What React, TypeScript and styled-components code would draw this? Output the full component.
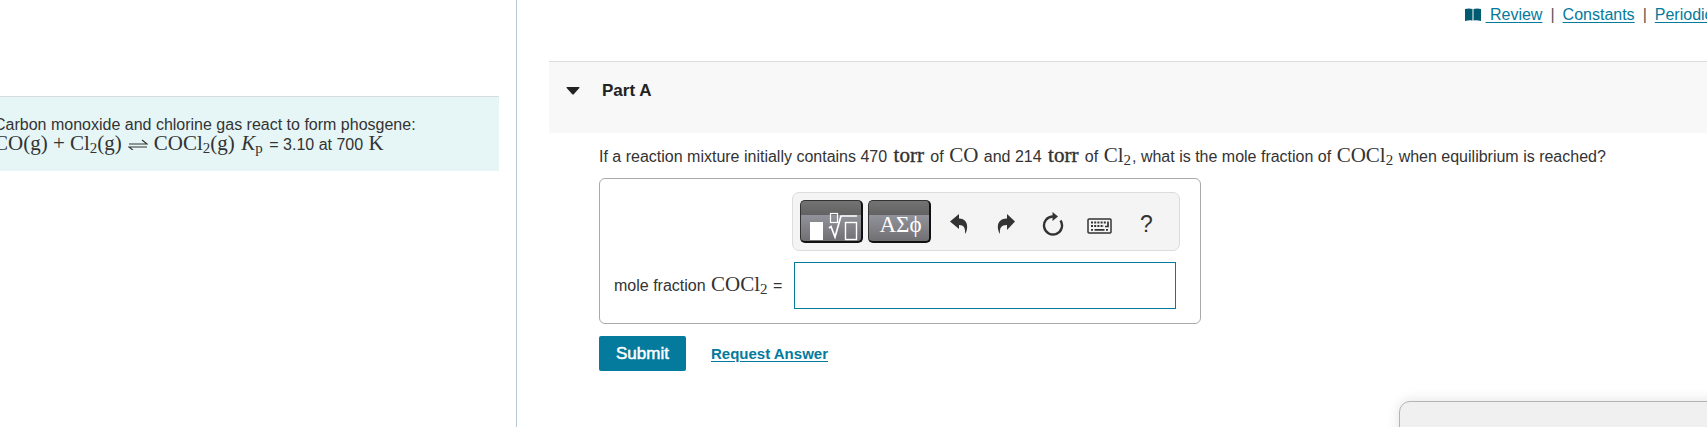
import React from "react";
import styled, { createGlobalStyle } from "styled-components";

const GlobalStyle = createGlobalStyle`
  * { box-sizing: border-box; }
  body {
    margin: 0;
    background: #fff;
    color: #333;
    font-family: "Liberation Sans", Arial, sans-serif;
    font-size: 16px;
    line-height: 20px;
    overflow: hidden;
  }
`;

const Page = styled.div`
  display: grid;
  grid-template-columns: minmax(0, 517fr) minmax(0, 1190fr);
  min-height: 100vh;
`;

const Sidebar = styled.aside`
  border-right: 1px solid #b9c8d6;
  padding: 96px 17px 0 0;
  overflow: hidden;
`;

const Intro = styled.section`
  margin-left: -20px;
  padding: 18px 0 16px 14px;
  border-top: 1px solid #d5dcdc;
  background: #e6f6f7;
  white-space: nowrap;
`;

const Line = styled.p`
  margin: 0;
  height: 20px;
`;

const Math = styled.span<{ $gap?: number; $bold?: boolean }>`
  font-family: "Liberation Serif", "Times New Roman", serif;
  font-size: 21px;
  line-height: 16px;
  padding: 0 ${(p) => p.$gap ?? 1}px;
  -webkit-text-stroke: ${(p) => (p.$bold ? "0.4px" : "0")};
`;

const Sub = styled.sub`
  font-size: 15px;
  line-height: 0;
  vertical-align: -3px;
`;

const Arrow = styled.svg`
  width: 20px;
  height: 12px;
  margin: 0 6px;
`;

const Main = styled.main`
  padding-left: 32px;
  overflow: hidden;
`;

const Resources = styled.nav`
  display: flex;
  justify-content: flex-end;
  align-items: center;
  height: 61px;
  margin-right: -48px;
  padding: 5px 0 36px;
  white-space: pre;
`;

const ResourceLink = styled.a`
  color: #047a9c;
  text-underline-offset: 2px;
`;

const Bar = styled.span`
  padding: 0 8px;
  color: #555;
`;

const Book = styled.svg`
  width: 16px;
  height: 14px;
  margin-right: 5px;
`;

const PartHeader = styled.header`
  height: 72px;
  padding: 19px 17px;
  display: flex;
  align-items: flex-start;
  border-top: 1px solid #dcdcdc;
  background: #f8f8f8;
`;

const Toggle = styled.button`
  display: flex;
  align-items: center;
  gap: 22px;
  padding: 0;
  border: 0;
  background: none;
  color: #222;
  font: bold 17px/20px "Liberation Sans", Arial, sans-serif;
`;

const PartBody = styled.form`
  padding: 14px 0 56px 50px;
`;

const Question = styled.p`
  margin: 0 0 11px;
  height: 20px;
  white-space: nowrap;
`;

const AnswerBox = styled.div`
  display: grid;
  grid-template-columns: 178px minmax(0, 1fr);
  align-items: center;
  row-gap: 11px;
  max-width: 602px;
  padding: 13px 20px 14px 14px;
  border: 1px solid #a9a9a9;
  border-radius: 6px;
`;

const Toolbar = styled.div`
  grid-column: 2;
  display: flex;
  align-items: center;
  height: 59px;
  padding: 0 7px;
  border: 1px solid #dcdcdc;
  border-radius: 7px;
  background: #f4f4f4;
`;

const PaletteButton = styled.button`
  display: flex;
  align-items: flex-end;
  justify-content: center;
  width: 63px;
  height: 43px;
  margin-right: 5px;
  padding: 0 0 0 3px;
  border: 1px solid #333;
  border-right: 2px solid #111;
  border-bottom: 2px solid #111;
  border-radius: 5px;
  background: linear-gradient(#737373 0, #626262 14px, #92929b 14px, #707073 100%);
  color: #fff;
  font: 23px/32px "Liberation Serif", serif;
`;

const Tools = styled.div`
  display: flex;
  margin-left: -1px;
`;

const ToolButton = styled.button`
  display: grid;
  place-items: center;
  width: 47px;
  height: 40px;
  padding: 4px 0 0;
  border: 0;
  background: none;
  color: #333;
  font: 23px/28px "Liberation Sans", Arial, sans-serif;
`;

const AnswerLabel = styled.label`
  white-space: nowrap;
`;

const AnswerInput = styled.input`
  height: 47px;
  margin: 0 4px 0 2px;
  min-width: 0;
  padding: 0 10px;
  border: 1px solid #047a9c;
  border-radius: 0;
  background: #fff;
  font: 18px "Liberation Sans", Arial, sans-serif;
  outline: none;
`;

const Actions = styled.div`
  display: flex;
  align-items: center;
  gap: 25px;
  margin-top: 12px;
`;

const Submit = styled.button`
  width: 87px;
  height: 35px;
  padding: 0;
  border: 0;
  border-radius: 2px;
  background: #047a9c;
  color: #fff;
  font: 17px/35px "Liberation Sans", Arial, sans-serif;
  -webkit-text-stroke: 0.5px #fff;
`;

const RequestLink = styled.a`
  color: #047a9c;
  font-size: 15px;
  font-weight: bold;
  text-underline-offset: 2px;
`;

const Panel = styled.div`
  position: fixed;
  right: -20px;
  bottom: -20px;
  width: 328px;
  height: 46px;
  border: 1px solid #b4b4b4;
  border-radius: 11px;
  background: #f0f0f0;
  box-shadow: 0 0 14px rgba(0, 0, 0, 0.12);
`;

const Phosgene = () => (
  <>
    COCl<Sub>2</Sub>
  </>
);

export default function App() {
  return (
    <>
      <GlobalStyle />
      <Page>
        <Sidebar>
          <Intro>
            <Line>Carbon monoxide and chlorine gas react to form phosgene:</Line>
            <Line>
              <Math $gap={0}>
                CO(g) + Cl<Sub>2</Sub>(g)
                <Arrow viewBox="0 0 20 12" fill="none" stroke="#333" strokeWidth="1.1">
                  <path d="M1 6H19L14 2M19 9H1L6 13" />
                </Arrow>
                <Phosgene />
                (g)
              </Math>{" "}
              <Math $gap={2}>
                <i>K</i>
                <Sub>p</Sub>
              </Math>{" "}
              = 3.10 at 700 <Math>K</Math>
            </Line>
          </Intro>
        </Sidebar>
        <Main>
          <Resources aria-label="Resources">
            <Book viewBox="0 0 16 14" aria-hidden="true">
              <path d="M0 1Q4 0 7.500 1V12.500Q4 12 0 13ZM8.500 1Q12 0 16 1V13Q12 12 8.500 12.500Z" fill="#005a70" />
            </Book>
            <ResourceLink href="#review">{" Review"}</ResourceLink>
            <Bar>|</Bar>
            <ResourceLink href="#constants">Constants</ResourceLink>
            <Bar>|</Bar>
            <ResourceLink href="#periodic">Periodic Table</ResourceLink>
          </Resources>
          <PartHeader>
            <Toggle type="button" aria-expanded="true">
              <svg width="14" height="8" viewBox="0 0 14 8" aria-hidden="true">
                <path d="M1 0H13Q14 0 13.3 1L8 7Q7 8 6 7L.7 1Q0 0 1 0Z" fill="#222" />
              </svg>
              Part A
            </Toggle>
          </PartHeader>
          <PartBody onSubmit={(e) => e.preventDefault()}>
            <Question>
              If a reaction mixture initially contains 470 <Math $gap={2} $bold>torr</Math> of <Math>CO</Math> and 214{" "}
              <Math $gap={2} $bold>torr</Math> of{" "}
              <Math>
                Cl<Sub>2</Sub>
              </Math>
              , what is the mole fraction of{" "}
              <Math>
                <Phosgene />
              </Math>{" "}
              when equilibrium is reached?
            </Question>
            <AnswerBox>
              <Toolbar role="toolbar" aria-label="Equation tools">
                <PaletteButton type="button" aria-label="Templates">
                  <svg width="50" height="30" viewBox="0 0 50 30" fill="none" stroke="#fff">
                    <rect x="2" y="11" width="13" height="18" fill="#fff" stroke="none" />
                    <rect x="22.500" y="2.500" width="7" height="9" strokeWidth="1.200" />
                    <path d="M21 17L23 15.500L27 26L33 5H49" strokeWidth="1.700" />
                    <rect x="37.500" y="11.500" width="11" height="17" strokeWidth="1.400" />
                  </svg>
                </PaletteButton>
                <PaletteButton type="button" aria-label="Symbols">
                  ΑΣϕ
                </PaletteButton>
                <Tools>
                  <ToolButton type="button" aria-label="Undo">
                    <svg width="18" height="20" viewBox="0 0 18 20" fill="#333">
                      <path d="M0 7.500L9 0V4.500C15 4.500 18 9 17 15Q16.500 18 15 20C15.500 14 14 11 9 11V15Z" />
                    </svg>
                  </ToolButton>
                  <ToolButton type="button" aria-label="Redo">
                    <svg width="18" height="20" viewBox="0 0 18 20" fill="#333">
                      <path d="M18 7.500L10 0V4.500C3 4.500 0 9 1 15Q1.500 18 3 20C2.500 14 4 11 10 11V16Z" />
                    </svg>
                  </ToolButton>
                  <ToolButton type="button" aria-label="Reset">
                    <svg width="22" height="24" viewBox="0 0 22 24" fill="none">
                      <path d="M11 4.500A9 9 0 1 0 18.500 8.500" stroke="#333" strokeWidth="2.400" />
                      <path d="M10.500 0L16 4.500L10.500 9Z" fill="#333" />
                    </svg>
                  </ToolButton>
                  <ToolButton type="button" aria-label="Keyboard shortcuts">
                    <svg width="25" height="21" viewBox="0 0 25 21" fill="none" stroke="#333">
                      <rect x="1" y="6" width="23" height="14" rx="1" strokeWidth="1.500" />
                      <path d="M4 9.500H19M4 13H17" strokeWidth="2" strokeDasharray="2 1.200" />
                      <path d="M21 8.500V13.500H18M4 16.800H6M7.500 16.800H17.500M19 16.800H21" strokeWidth="1.700" />
                    </svg>
                  </ToolButton>
                  <ToolButton type="button" aria-label="Help">
                    ?
                  </ToolButton>
                </Tools>
              </Toolbar>
              <AnswerLabel htmlFor="answer">
                mole fraction{" "}
                <Math>
                  <Phosgene />
                </Math>{" "}
                =
              </AnswerLabel>
              <AnswerInput id="answer" type="text" />
            </AnswerBox>
            <Actions>
              <Submit type="submit">Submit</Submit>
              <RequestLink href="#answer">Request Answer</RequestLink>
            </Actions>
          </PartBody>
        </Main>
      </Page>
      <Panel />
    </>
  );
}
